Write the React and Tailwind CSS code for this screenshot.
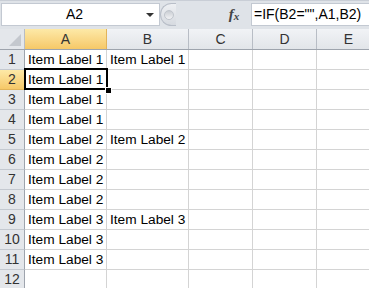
export default function App() {
  const cols = [
    { name: "A", w: 82, sel: true },
    { name: "B", w: 82 },
    { name: "C", w: 64 },
    { name: "D", w: 64 },
    { name: "E", w: 64 },
  ];
  const data = [
    ["Item Label 1", "Item Label 1"],
    ["Item Label 1", ""],
    ["Item Label 1", ""],
    ["Item Label 1", ""],
    ["Item Label 2", "Item Label 2"],
    ["Item Label 2", ""],
    ["Item Label 2", ""],
    ["Item Label 2", ""],
    ["Item Label 3", "Item Label 3"],
    ["Item Label 3", ""],
    ["Item Label 3", ""],
    ["", ""],
  ];
  return (
    <div className="w-[369px] h-[288px] overflow-hidden bg-white font-['Liberation_Sans',sans-serif] relative">
      {/* Formula bar */}
      <div className="h-[29px] bg-[#dfe3e8] flex items-start pt-[2px] border-t border-[#c9ced6]">
        <div className="ml-[1px] w-[159px] h-[23px] bg-white border border-[#c3c9d2] flex items-center relative">
          <span className="flex-1 text-center text-[14px] text-black pr-[12px]">A2</span>
          <span className="absolute right-[5px] top-[9px] w-0 h-0 border-l-[4px] border-r-[4px] border-t-[4px] border-l-transparent border-r-transparent border-t-[#333]"></span>
        </div>
        <div className="w-[16px] h-[23px] rounded-l-full border border-r-0 border-[#b8bec8] bg-gradient-to-b from-[#eef0f3] to-[#d6dae0] flex items-center justify-start pl-[3px]">
          <div className="w-[10px] h-[10px] rounded-full bg-gradient-to-b from-[#c9cdd3] to-[#f2f3f5] border border-[#c0c5cc]"></div>
        </div>
        <div className="w-[49px] h-[23px]"></div>
        <div className="w-[18px] h-[23px] flex items-center justify-center font-['Liberation_Serif',serif] italic text-[#444] text-[15px] font-bold leading-none">
          <span>f</span><span className="text-[11px] mt-[3px]">x</span>
        </div>
        <div className="ml-[8px] flex-1 h-[23px] bg-white border border-[#c3c9d2] border-r-0 flex items-center pl-[2px] text-[14px] text-black">
          =IF(B2="",A1,B2)
        </div>
      </div>
      {/* Column header */}
      <div className="flex h-[21px] border-b border-[#9ea4ad]">
        <div className="w-[25px] shrink-0 bg-[#e4e7eb] border-r border-[#b8bdc5] relative">
          <svg className="absolute right-[3px] bottom-[3px]" width="12" height="12"><polygon points="12,0 12,12 0,12" fill="#c4c8ce" /></svg>
        </div>
        {cols.map((c) => (
          <div
            key={c.name}
            className={
              c.sel
                ? "shrink-0 flex items-center justify-center text-[14px] text-[#333] border-r border-[#e2b45a] bg-gradient-to-b from-[#fde9a7] to-[#f6c867]"
                : "shrink-0 flex items-center justify-center text-[14px] text-[#333] border-r border-[#b8bdc5] bg-gradient-to-b from-[#f1f3f6] to-[#e2e5e9]"
            }
            style={{ width: c.w }}
          >
            {c.name}
          </div>
        ))}
      </div>
      {/* Rows */}
      {data.map((r, i) => (
        <div key={i} className="flex h-[20px]">
          <div
            className={
              i === 1
                ? "w-[25px] shrink-0 flex items-center justify-center text-[14px] text-[#333] bg-gradient-to-b from-[#fde9a7] to-[#f6c867] border-r border-[#e2b45a] border-b border-b-[#e2b45a]"
                : "w-[25px] shrink-0 flex items-center justify-center text-[14px] text-[#333] bg-[#e4e7eb] border-r border-[#9ea4ad] border-b border-b-[#c4c9d0]"
            }
          >
            {i + 1}
          </div>
          {cols.map((c, j) => (
            <div
              key={c.name}
              className="shrink-0 border-r border-b border-[#d4d4d4] flex items-end pb-[1px] pl-[3px] text-[13.7px] text-black whitespace-nowrap leading-[17px]"
              style={{ width: c.w }}
            >
              {j < 2 ? r[j] : ""}
            </div>
          ))}
        </div>
      ))}
      {/* Selection */}
      <div className="absolute left-[24px] top-[68px] w-[84px] h-[22px] border-2 border-black pointer-events-none"></div>
      <div className="absolute left-[105px] top-[87px] w-[5px] h-[5px] bg-black border border-white box-content"></div>
    </div>
  );
}
